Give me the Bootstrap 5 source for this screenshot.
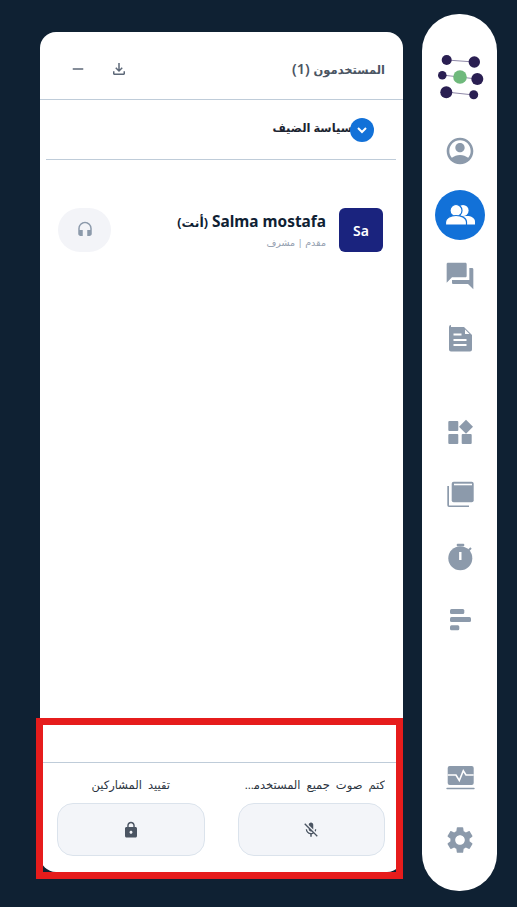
<!DOCTYPE html>
<html lang="ar" dir="rtl">
<head>
    <meta charset="UTF-8">
    <meta name="viewport" content="width=device-width, initial-scale=1.0">
    <title>المستخدمون</title>
    <link href="https://cdn.jsdelivr.net/npm/bootstrap@5.3.2/dist/css/bootstrap.min.css" rel="stylesheet">
    <style>
        html, body { height: 100%; }
        body {
            background: #0f2133;
            font-family: "Noto Sans", "DejaVu Sans", sans-serif;
            padding: 14px 20px 16px 0;
            gap: 19px;
            overflow: hidden;
        }
        .rail {
            width: 75px;
            height: 877px;
            background: #fff;
            border-radius: 37px;
            padding-bottom: 20px;
            flex-shrink: 0;
        }
        .rail-logo { height: 106px; padding-top: 39px; }
        .rail-item { height: 62.6px; color: #8c9aab; }
        .rail-active {
            width: 50px;
            height: 50px;
            border-radius: 50%;
            background: #1271d8;
            margin-top: 2px;
        }
        .rail-mid { margin-top: 30px; }
        .panel-box {
            width: 363px;
            height: 840px;
            margin-top: 18px;
            background: #fff;
            border-radius: 16px;
            overflow: hidden;
        }
        .panel-wrap { position: relative; }
        .panel-head {
            height: 68px;
            padding: 6px 18px 0 29px;
            border-bottom: 1px solid #bfccd9;
            color: #4b5563;
        }
        .panel-title { font-size: 14.5px; font-weight: 600; }
        .title-ar { font-size: 11.5px; font-weight: 700; }
        .head-icons { gap: 23px; color: #5d6878; }
        .policy-row {
            height: 60px;
            margin: 0 7px 0 6px;
            padding-right: 22px;
            border-bottom: 1px solid #bfccd9;
            font-size: 11.5px;
            font-weight: 700;
            color: #1b2430;
        }
        .chev {
            width: 24px;
            height: 24px;
            border-radius: 50%;
            background: #1271d8;
            position: relative;
            z-index: 1;
        }
        .policy-text { margin-right: -2px; padding-bottom: 3px; }
        .user-row { padding: 48px 20px 0 18px; }
        .user-avatar {
            width: 44px;
            height: 44px;
            border-radius: 6px;
            background: #1a237e;
            color: #fff;
            font-size: 14px;
            font-weight: 600;
        }
        .user-info { margin-right: 13px; padding-top: 4px; }
        .user-name { font-size: 15.4px; font-weight: 700; color: #0f2133; line-height: 20px; }
        .you-ar { font-size: 12.5px; }
        .user-role { font-size: 9.5px; color: #94a0b0; line-height: 16px; margin-top: 2px; }
        .head-pill {
            width: 53px;
            height: 44px;
            border-radius: 22px;
            background: #f3f4f8;
            color: #8c9aab;
        }
        .panel-foot {
            border-top: 1px solid #bfccd9;
            padding: 12px 18px 16px 17px;
            gap: 33px;
        }
        .foot-col { width: 148px; min-width: 0; }
        .foot-label {
            font-size: 11.5px;
            word-spacing: 3px;
            color: #2b3440;
            line-height: 20px;
            margin-bottom: 8px;
        }
        .foot-label-cut { padding-left: 7px; }
        .foot-btn {
            height: 53px;
            background: #f3f5f9;
            border: 1px solid #dbe3ec;
            border-radius: 16px;
            color: #4b5563;
        }
        .red-frame {
            position: absolute;
            left: -4px;
            right: 0;
            top: 704px;
            height: 161px;
            border: 7px solid #e61c1c;
            pointer-events: none;
        }
    </style>
</head>
<body class="d-flex align-items-start">
    <div class="rail d-flex flex-column align-items-center">
        <div class="rail-logo">
            <svg width="48" height="48" viewBox="0 0 48 48">
                <g stroke="#8f88a8" stroke-width="1">
                    <line x1="11" y1="7" x2="38" y2="9"/>
                    <line x1="6" y1="22" x2="41" y2="26"/>
                    <line x1="10" y1="39" x2="38" y2="42"/>
                </g>
                <g fill="#2a1f52">
                    <circle cx="10.7" cy="7" r="5"/>
                    <circle cx="38.3" cy="9" r="5.7"/>
                    <circle cx="6.3" cy="22.3" r="4.3"/>
                    <circle cx="41.3" cy="26" r="6"/>
                    <circle cx="10.3" cy="39.3" r="6"/>
                    <circle cx="37.7" cy="41.7" r="4.5"/>
                </g>
                <circle cx="24" cy="24" r="6.8" fill="#6fb97c"/>
            </svg>
        </div>
        <div class="rail-item d-flex align-items-center justify-content-center">
            <svg width="32" height="32" viewBox="0 0 24 24" fill="currentColor"><path d="M12 2C6.480 2 2 6.480 2 12s4.480 10 10 10 10-4.480 10-10S17.520 2 12 2zM18.140 17.120C16.450 15.800 14.320 15 12 15s-4.450.8-6.140 2.120C4.700 15.730 4 13.950 4 12c0-4.420 3.580-8 8-8s8 3.580 8 8c0 1.950-.7 3.730-1.860 5.120zM12 6c-1.930 0-3.500 1.570-3.500 3.500S10.070 13 12 13s3.500-1.570 3.500-3.500S13.930 6 12 6z"/></svg>
        </div>
        <div class="rail-item d-flex align-items-center justify-content-center">
            <div class="rail-active d-flex align-items-center justify-content-center">
                <svg width="32" height="32" viewBox="0 0 32 32" fill="#fff">
                    <circle cx="19" cy="11.500" r="5.600"/>
                    <path d="M15 25.500v-3c0-3.500 4-5.500 8-5.500s8 2 8 5.500v3z"/>
                    <g stroke="#1271d8" stroke-width="1.200">
                        <circle cx="12" cy="11.500" r="6"/>
                        <path d="M1.500 26v-3c0-4 5-6.500 10.500-6.500s10.500 2.500 10.500 6.500v3z"/>
                    </g>
                </svg>
            </div>
        </div>
        <div class="rail-item d-flex align-items-center justify-content-center">
            <svg width="32" height="32" viewBox="0 0 24 24" fill="currentColor"><path d="M21 6h-2v9H6v2c0 .55.45 1 1 1h11l4 4V7c0-.55-.45-1-1-1zm-4 6V3c0-.55-.45-1-1-1H3c-.55 0-1 .45-1 1v14l4-4h10c.55 0 1-.45 1-1z"/></svg>
        </div>
        <div class="rail-item d-flex align-items-center justify-content-center">
            <svg width="32" height="32" viewBox="0 0 32 32"><path d="M7 4h13l8 8v14.500a2 2 0 0 1-2 2H7a2 2 0 0 1-2-2v-22.500a2 2 0 0 1 2-2z" fill="currentColor"/><path d="M21 6.500l4.500 4.500H21z" fill="#fff"/><rect x="9.500" y="10.500" width="8" height="2" fill="#fff"/><rect x="9.500" y="16" width="13" height="2" fill="#fff"/><rect x="9.500" y="21" width="13" height="2" fill="#fff"/></svg>
        </div>
        <div class="rail-mid">
            <div class="rail-item d-flex align-items-center justify-content-center">
                <svg width="32" height="32" viewBox="0 0 32 32" fill="currentColor"><rect x="4.300" y="5" width="10" height="10" rx="1"/><path d="M22 3.700l7 7-7 7-7-7z"/><rect x="4.300" y="18" width="10" height="10" rx="1"/><rect x="17.700" y="18" width="10" height="10" rx="1"/></svg>
            </div>
            <div class="rail-item d-flex align-items-center justify-content-center">
                <svg width="32" height="32" viewBox="0 0 32 32" fill="currentColor"><path d="M3.300 8H5v19.400h20v1.600H5a1.700 1.700 0 0 1-1.700-1.700z"/><rect x="7.700" y="3.700" width="22" height="20.600" rx="2"/><rect x="10" y="5.700" width="18" height="1.600" fill="#fff"/></svg>
            </div>
            <div class="rail-item d-flex align-items-center justify-content-center">
                <svg width="32" height="32" viewBox="0 0 32 32" fill="currentColor"><circle cx="16.300" cy="17.300" r="12"/><rect x="12.700" y="2.700" width="7.600" height="2.600" rx="1"/><path d="M24.500 9.500l2.500-2.500" stroke="currentColor" stroke-width="2"/><rect x="15.100" y="11" width="2.400" height="8" fill="#fff"/></svg>
            </div>
            <div class="rail-item d-flex align-items-center justify-content-center">
                <svg width="32" height="32" viewBox="0 0 32 32" fill="currentColor"><rect x="6" y="6" width="14.300" height="5" rx="1.500"/><rect x="6" y="14" width="21" height="5" rx="1.500"/><rect x="6" y="22.300" width="9.300" height="5" rx="1.500"/></svg>
            </div>
        </div>
        <div class="mt-auto">
            <div class="rail-item d-flex align-items-center justify-content-center">
                <svg width="32" height="32" viewBox="0 0 32 32"><rect x="3.700" y="5" width="26" height="19" rx="2" fill="currentColor"/><rect x="2.300" y="26.700" width="28.400" height="1.600" rx=".8" fill="currentColor"/><path d="M3.700 14H12l3.300 5.500 4-9.800 2.700 4.300h7.700" fill="none" stroke="#fff" stroke-width="1.600"/></svg>
            </div>
            <div class="rail-item d-flex align-items-center justify-content-center">
                <svg width="32" height="32" viewBox="0 0 24 24" fill="currentColor"><path d="M19.140 12.940c.04-.3.06-.61.06-.94 0-.32-.02-.64-.07-.94l2.030-1.580c.18-.14.23-.41.12-.61l-1.920-3.320c-.12-.22-.37-.29-.59-.22l-2.390.96c-.5-.38-1.030-.7-1.620-.94l-.36-2.540c-.04-.24-.24-.41-.48-.41h-3.840c-.24 0-.43.17-.47.41l-.36 2.540c-.59.24-1.130.57-1.620.94l-2.390-.96c-.22-.08-.47 0-.59.22L2.740 8.870c-.12.21-.08.47.12.61l2.030 1.580c-.05.3-.09.63-.09.94s.02.64.07.94l-2.030 1.580c-.18.14-.23.41-.12.61l1.920 3.320c.12.22.37.29.59.22l2.390-.96c.5.38 1.030.7 1.620.94l.36 2.540c.05.24.24.41.48.41h3.840c.24 0 .44-.17.47-.41l.36-2.540c.59-.24 1.130-.56 1.620-.94l2.390.96c.22.08.47 0 .59-.22l1.920-3.320c.12-.22.07-.47-.12-.61l-2.010-1.580zM12 15.600c-1.980 0-3.600-1.620-3.600-3.600s1.620-3.600 3.600-3.600 3.600 1.620 3.600 3.600-1.620 3.600-3.600 3.600z"/></svg>
            </div>
        </div>
    </div>

    <div class="panel-wrap">
        <div class="panel-box d-flex flex-column">
            <div class="panel-head d-flex align-items-center justify-content-between">
                <div class="panel-title"><span class="title-ar">المستخدمون</span> (1)</div>
                <div class="head-icons d-flex align-items-center">
                    <svg width="18" height="18" viewBox="0 0 24 24" fill="currentColor"><path d="M18 15v3H6v-3H4v3c0 1.100.9 2 2 2h12c1.100 0 2-.9 2-2v-3h-2zm-1-4l-1.410-1.410L13 12.170V4h-2v8.170L8.410 9.590 7 11l5 5 5-5z"/></svg>
                    <svg width="18" height="18" viewBox="0 0 24 24" fill="currentColor"><rect x="5" y="11" width="14" height="2"/></svg>
                </div>
            </div>
            <div class="policy-row d-flex align-items-center">
                <div class="chev d-flex align-items-center justify-content-center">
                    <svg width="14" height="14" viewBox="0 0 14 14"><path d="M3 5l4 4 4-4" fill="none" stroke="#fff" stroke-width="2"/></svg>
                </div>
                <div class="policy-text">سياسة الضيف</div>
            </div>
            <div class="user-row d-flex align-items-start">
                <div class="user-avatar d-flex align-items-center justify-content-center">Sa</div>
                <div class="user-info flex-grow-1">
                    <div class="user-name">Salma mostafa <span class="you-ar">(أنت)</span></div>
                    <div class="user-role">مقدم | مشرف</div>
                </div>
                <div class="head-pill d-flex align-items-center justify-content-center">
                    <svg width="18" height="18" viewBox="0 0 24 24" fill="currentColor"><path d="M12 1a9 9 0 0 0-9 9v7c0 1.660 1.340 3 3 3h3v-8H5v-2c0-3.870 3.130-7 7-7s7 3.130 7 7v2h-4v8h3c1.660 0 3-1.340 3-3v-7a9 9 0 0 0-9-9z"/></svg>
                </div>
            </div>
            <div class="panel-foot mt-auto d-flex">
                <div class="foot-col">
                    <div class="foot-label foot-label-cut text-truncate">كتم صوت جميع المستخدمين</div>
                    <div class="foot-btn d-flex align-items-center justify-content-center">
                        <svg width="18" height="18" viewBox="0 0 24 24" fill="currentColor"><path d="M19 11h-1.700c0 .74-.16 1.430-.43 2.050l1.230 1.230c.56-.98.9-2.090.9-3.280zm-4.020.17c0-.06.02-.11.02-.17V5c0-1.660-1.340-3-3-3S9 3.340 9 5v.18l5.980 5.990zM4.270 3L3 4.270l6.010 6.010V11c0 1.660 1.330 3 2.990 3 .22 0 .44-.03.65-.08l1.660 1.660c-.71.33-1.500.52-2.310.52-2.760 0-5.300-2.100-5.300-5.100H5c0 3.410 2.720 6.230 6 6.720V21h2v-3.280c.91-.13 1.770-.45 2.540-.9L19.730 21 21 19.730 4.270 3z"/></svg>
                    </div>
                </div>
                <div class="foot-col">
                    <div class="foot-label text-truncate text-center">تقييد المشاركين</div>
                    <div class="foot-btn d-flex align-items-center justify-content-center">
                        <svg width="18" height="18" viewBox="0 0 24 24" fill="currentColor"><path d="M18 8h-1V6c0-2.760-2.240-5-5-5S7 3.240 7 6v2H6c-1.100 0-2 .9-2 2v10c0 1.100.9 2 2 2h12c1.100 0 2-.9 2-2V10c0-1.100-.9-2-2-2zm-6 9c-1.100 0-2-.9-2-2s.9-2 2-2 2 .9 2 2-.9 2-2 2zm3.100-9H8.900V6c0-1.710 1.390-3.100 3.100-3.100 1.710 0 3.100 1.390 3.100 3.100v2z"/></svg>
                    </div>
                </div>
            </div>
        </div>
        <div class="red-frame"></div>
    </div>

    <script src="https://cdn.jsdelivr.net/npm/bootstrap@5.3.2/dist/js/bootstrap.bundle.min.js"></script>
</body>
</html>
